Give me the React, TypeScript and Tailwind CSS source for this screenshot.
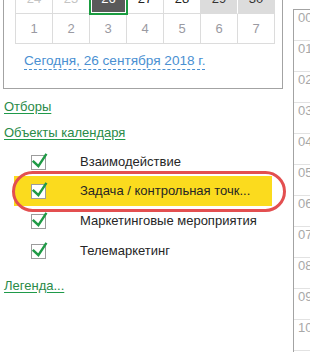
import React from "react";

function Check() {
  return (
    <svg width="18" height="18" viewBox="0 0 18 18" className="shrink-0">
      <rect x="0.5" y="2.5" width="14" height="14" fill="#fff" stroke="#9c9c9c" strokeWidth="1" />
      <path d="M2.6 8.6 L7.4 13.2 L14.8 1.8" fill="none" stroke="#1f9a45" strokeWidth="2.4" strokeLinecap="square" strokeLinejoin="miter" />
    </svg>
  );
}

const items = [
  { label: "Взаимодействие", h: "h-[29px]", active: false },
  { label: "Задача / контрольная точк...", h: "h-[30px]", active: true },
  { label: "Маркетинговые мероприятия", h: "h-[30px]", active: false },
  { label: "Телемаркетинг", h: "h-[29px]", active: false },
];

const hours = ["00", "01", "02", "03", "04", "05", "06", "07", "08", "09", "10", "11"];

export default function App() {
  return (
    <div className="w-[310px] h-[352px] overflow-hidden bg-white flex font-['Liberation_Sans',Arial,sans-serif] text-[13px]">
      <div className="w-[293px] shrink-0 flex flex-col">
        <div className="ml-[3px] w-[280px] -mt-[16px] border-x border-b border-[#a3a3a3]">
          <div className="ml-[11px] w-[260px] grid grid-cols-7 border-l border-[#dcdcdc] text-[13px]">
            <div className="h-[30px] border-r border-b border-[#dcdcdc] flex items-center justify-center text-[#c4c4c4]">24</div>
            <div className="h-[30px] border-r border-b border-[#dcdcdc] flex items-center justify-center text-[#c4c4c4]">25</div>
            <div className="relative h-[30px] border-r border-b border-[#dcdcdc]">
              <div className="absolute -left-px -top-px -right-[2px] -bottom-[2px] border-2 border-[#1a9c40] bg-white p-px">
                <div className="w-full h-full bg-[#5a5a5a] text-white flex items-center justify-center">26</div>
              </div>
            </div>
            <div className="h-[30px] border-r border-b border-[#dcdcdc] flex items-center justify-center text-[#222]">27</div>
            <div className="h-[30px] border-r border-b border-[#dcdcdc] flex items-center justify-center text-[#222]">28</div>
            <div className="h-[30px] border-r border-r-white border-b border-[#dcdcdc] bg-[#dcdcdc] flex items-center justify-center text-[#333]">29</div>
            <div className="h-[30px] border-r border-b border-[#dcdcdc] bg-[#dcdcdc] flex items-center justify-center text-[#333]">30</div>
            {["1", "2", "3", "4", "5", "6", "7"].map((d) => (
              <div key={d} className="h-[30px] border-r border-b border-[#dcdcdc] flex items-center justify-center text-[#9a9aa2]">
                {d}
              </div>
            ))}
          </div>
          <div className="flex ml-[20px] mt-[9px] mb-[18px]">
            <span className="text-[13.6px] leading-[16px] text-[#4a90d2] border-b border-dashed border-[#4a90d2]">
              Сегодня, 26 сентября 2018 г.
            </span>
          </div>
        </div>

        <div className="ml-[4px] mt-[10px] leading-[16px]">
          <span className="text-[#2a8a48] underline decoration-[#1f9a4a] underline-offset-2">Отборы</span>
        </div>
        <div className="ml-[4px] mt-[10px] leading-[16px]">
          <span className="text-[#2a8a48] underline decoration-[#1f9a4a] underline-offset-2">Объекты календаря</span>
        </div>

        <div className="relative ml-[14px] w-[258px] mt-[6px] flex flex-col">
          {items.map((it) => (
            <div
              key={it.label}
              className={`${it.h} flex items-center pl-[17px] ${it.active ? "bg-[#fbdb1e]" : ""}`}
            >
              <div className="w-[49px] flex items-center">
                <Check />
              </div>
              <span className="text-[#262626] leading-[16px] whitespace-nowrap">{it.label}</span>
            </div>
          ))}
          <div className="absolute -left-[2px] top-[24px] w-[274px] h-[41px] border-[3px] border-[#e34f50] rounded-full pointer-events-none" />
        </div>

        <div className="ml-[4px] mt-[13px] leading-[16px]">
          <span className="text-[#2a8a48] underline decoration-[#1f9a4a] underline-offset-2">Легенда...</span>
        </div>
      </div>

      <div className="flex-1 mt-[9px] border-l border-t border-[#a3a3a3] flex flex-col">
        {hours.map((h) => (
          <div key={h} className="h-[31px] shrink-0 border-b border-[#e2e2e2] pl-[4px] leading-[16px] text-[#a8a8a8]">
            {h}
          </div>
        ))}
      </div>
    </div>
  );
}
